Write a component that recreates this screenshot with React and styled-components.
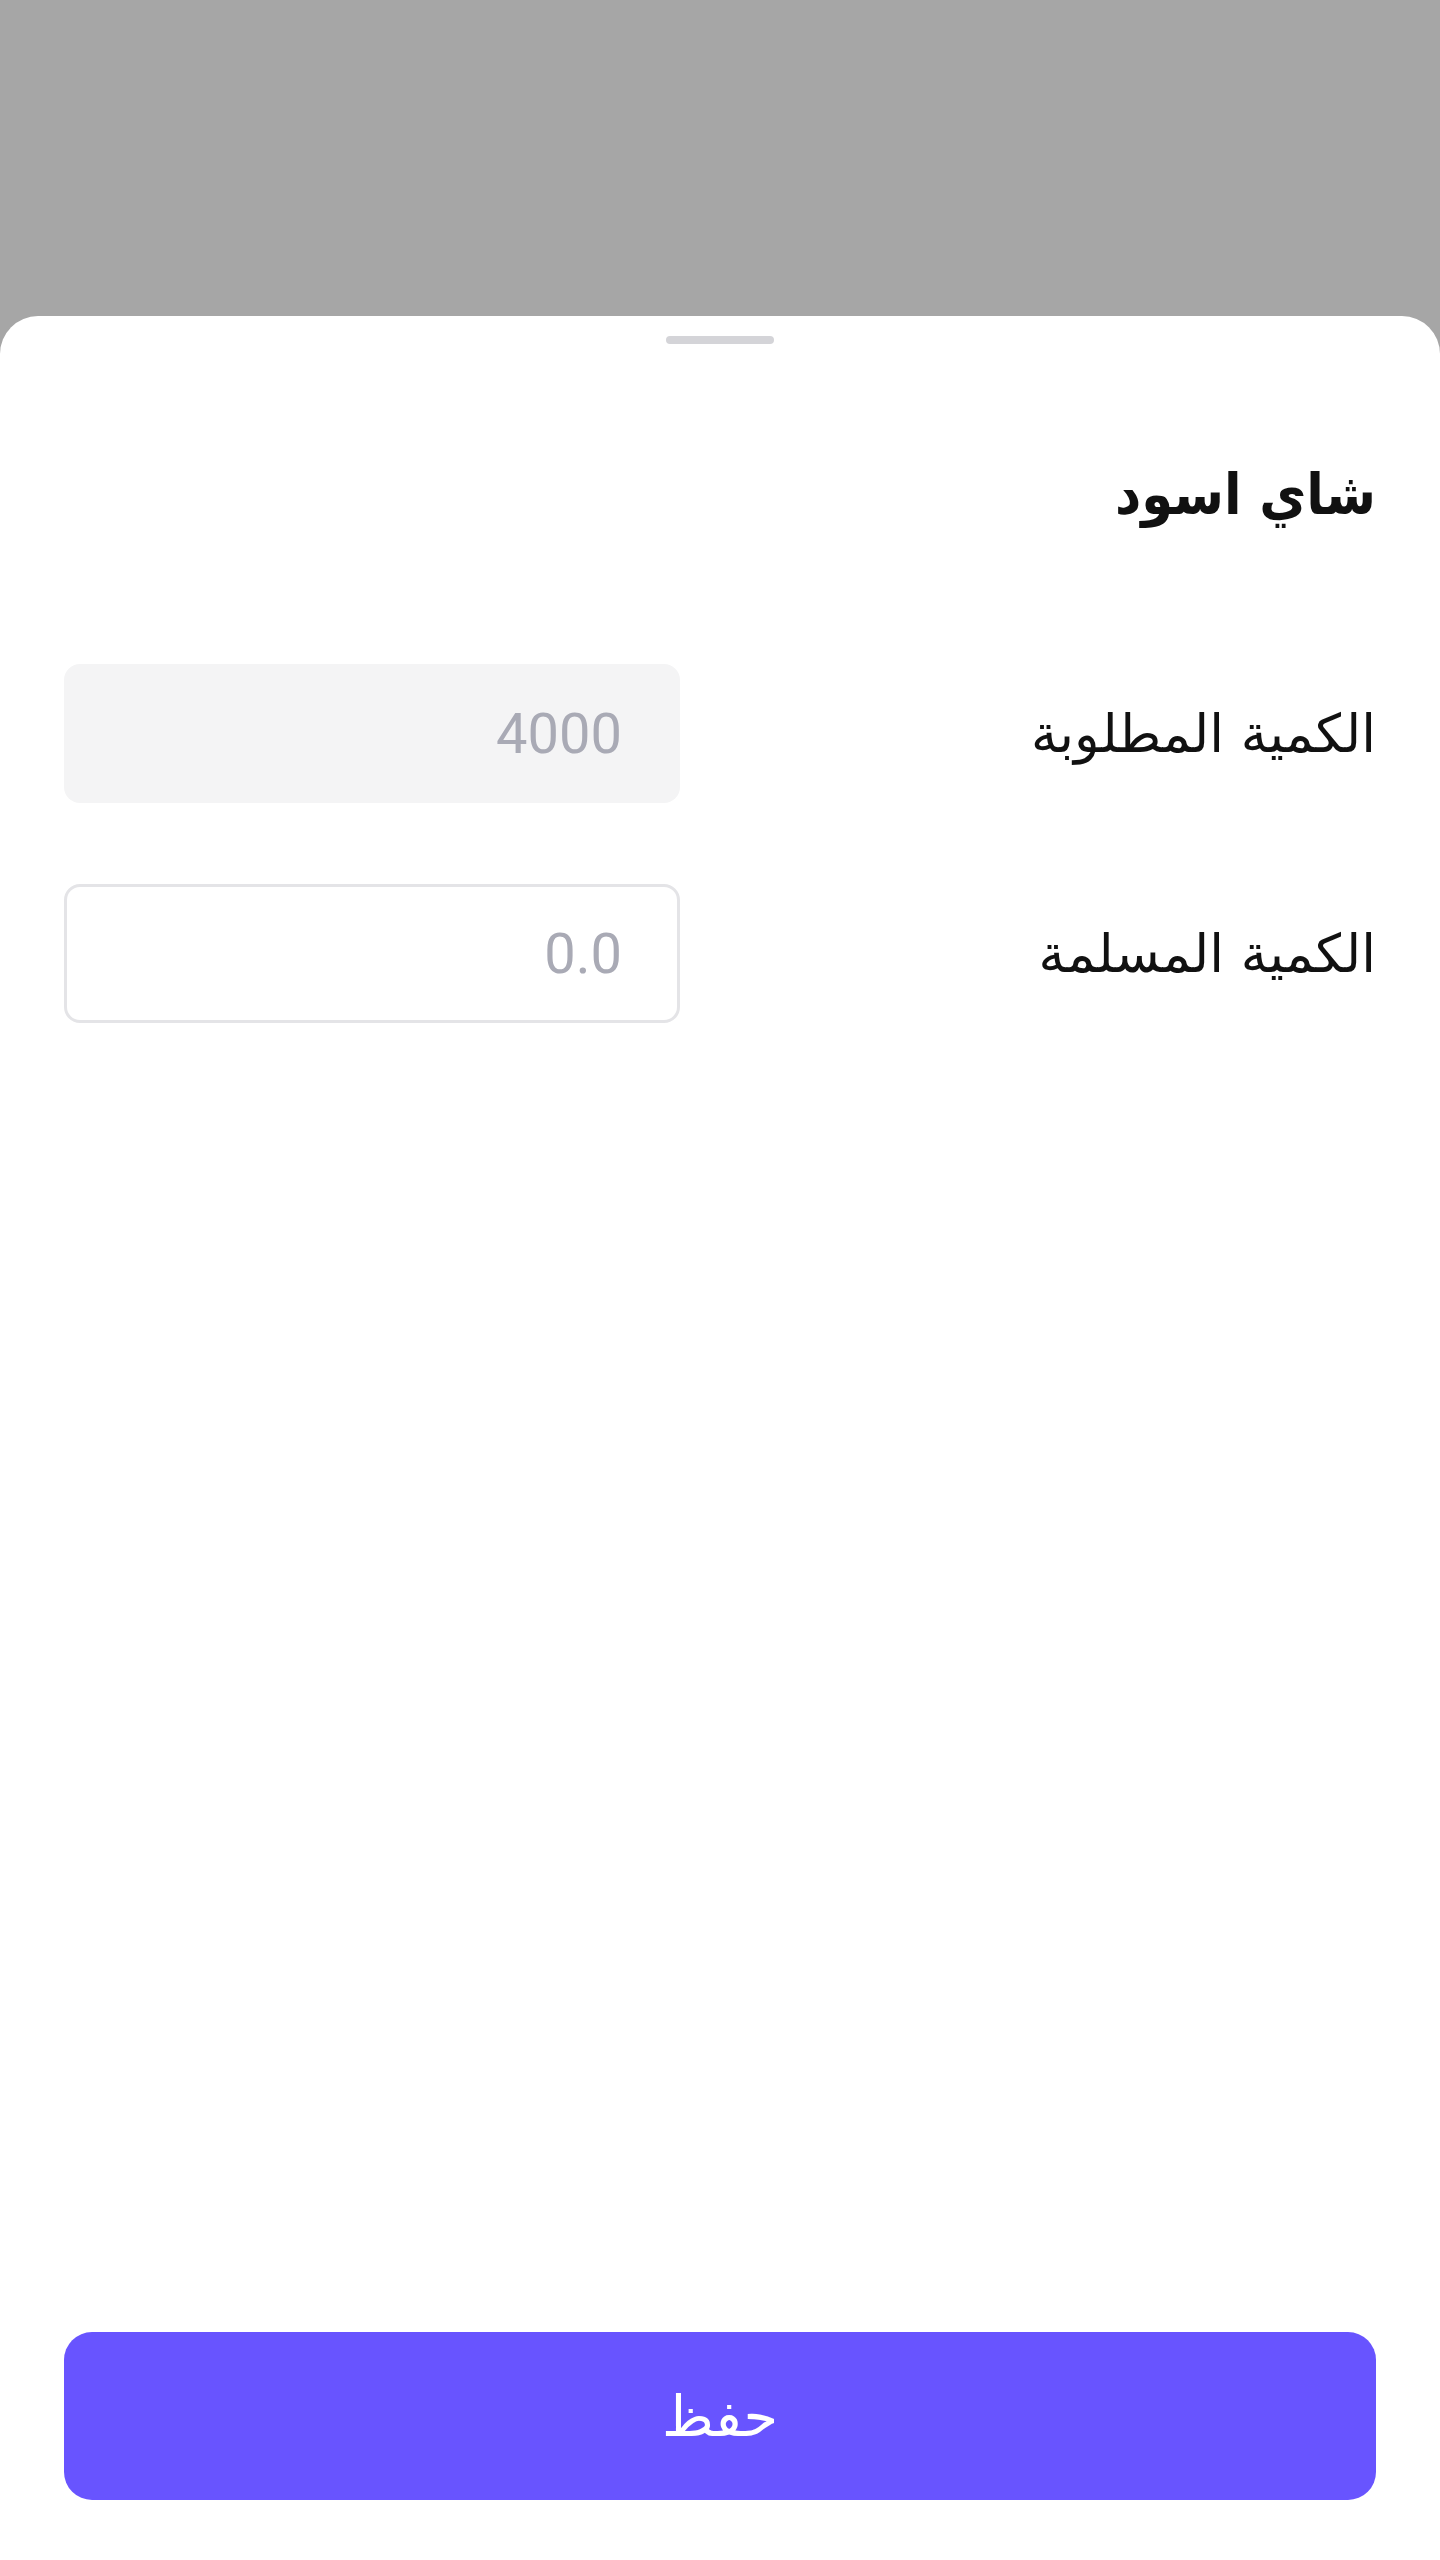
import React from "react";
import styled, { createGlobalStyle } from "styled-components";

const Global = createGlobalStyle`
  html, body { margin: 0; padding: 0; }
  body { background: #a6a6a6; font-family: "DejaVu Sans", "Noto Sans", sans-serif; }
  * { box-sizing: border-box; }
`;

const Screen = styled.div`
  width: 1440px;
  height: 2560px;
  background: #a6a6a6;
  display: flex;
  flex-direction: column;
  justify-content: flex-end;
`;

const Sheet = styled.div`
  direction: rtl;
  height: 2244px;
  background: #ffffff;
  border-radius: 38px 38px 0 0;
  display: flex;
  flex-direction: column;
  padding: 0 64px 60px 64px;
`;

const Handle = styled.div`
  align-self: center;
  width: 108px;
  height: 8px;
  border-radius: 4px;
  background: #d4d4d8;
  margin-top: 20px;
`;

const Title = styled.h1`
  margin: 102px 0 0;
  font-family: "DejaVu Sans Condensed", "DejaVu Sans", sans-serif;
  font-stretch: condensed;
  font-weight: 700;
  font-size: 57px;
  line-height: 96px;
  color: #111111;
`;

const Fields = styled.div`
  display: flex;
  flex-direction: column;
  gap: 81px;
  margin-top: 122px;
`;

const Row = styled.div`
  display: flex;
  align-items: center;
  justify-content: space-between;
`;

const Label = styled.label`
  font-family: "DejaVu Sans", sans-serif;
  font-size: 53px;
  color: #111111;
`;

const Field = styled.input`
  width: 616px;
  height: 139px;
  border-radius: 16px;
  border: 3.5px solid ${(p) => (p.$disabled ? "transparent" : "#e4e4e7")};
  background: ${(p) => (p.$disabled ? "#f4f4f5" : "#ffffff")};
  padding: 0 55px;
  font-family: Roboto, sans-serif;
  font-size: 56px;
  color: #a9aab5;
  direction: rtl;
  text-align: right;
  outline: none;
  &::placeholder { color: #a9aab5; }
`;

const Spacer = styled.div`
  flex: 1;
`;

const SaveButton = styled.button`
  height: 168px;
  width: 100%;
  border: none;
  border-radius: 28px;
  background: #6854ff;
  color: #ffffff;
  font-family: "DejaVu Sans", sans-serif;
  font-size: 56px;
  cursor: pointer;
`;

export default function App() {
  return (
    <>
      <Global />
      <Screen>
        <Sheet>
          <Handle />
          <Title>شاي اسود</Title>
          <Fields>
            <Row>
              <Label>الكمية المطلوبة</Label>
              <Field $disabled readOnly value="4000" />
            </Row>
            <Row>
              <Label>الكمية المسلمة</Label>
              <Field placeholder="0.0" />
            </Row>
          </Fields>
          <Spacer />
          <SaveButton>حفظ</SaveButton>
        </Sheet>
      </Screen>
    </>
  );
}
